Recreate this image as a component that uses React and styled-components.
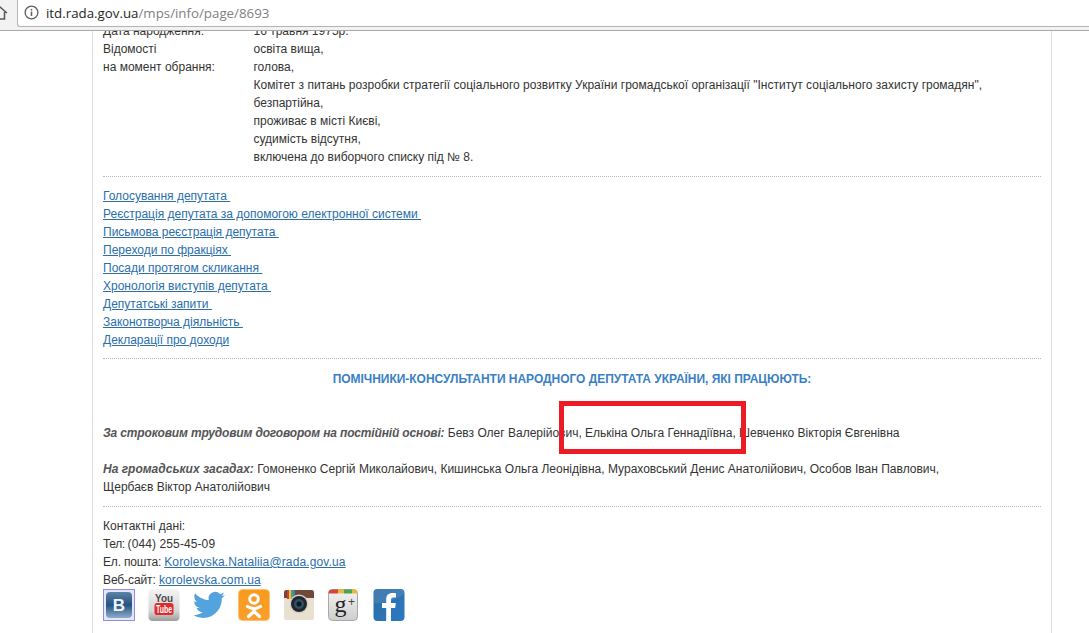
import React from 'react';
import styled, { createGlobalStyle } from 'styled-components';

const GlobalStyle = createGlobalStyle`
  html, body {
    margin: 0;
    padding: 0;
    height: 100%;
    overflow: hidden;
    background: #fff;
    font-family: "Liberation Sans", Arial, sans-serif;
  }
`;

const Page = styled.div`
  width: 1089px;
  height: 633px;
  overflow: hidden;
  display: flex;
  flex-direction: column;
`;

const Toolbar = styled.div`
  position: relative;
  z-index: 2;
  flex: none;
  height: 30px;
  background: #f2f2f2;
  border-bottom: 1px solid #a9a9a9;
  display: flex;
  align-items: flex-start;
`;

const HomeButton = styled.div`
  flex: none;
  width: 17px;
  height: 26px;
  overflow: hidden;
  display: flex;
  align-items: center;
  justify-content: flex-end;
  padding-right: 9px;
  box-sizing: border-box;
  color: #5a5a5a;
`;

const Omnibox = styled.div`
  flex: 1;
  height: 25px;
  background: #fff;
  border: 1px solid #b4b4b4;
  border-top: none;
  border-right: none;
  border-radius: 0 0 0 3px;
  display: flex;
  align-items: center;
  padding-left: 6px;
  gap: 7px;
  font-size: 13.3px;
  font-family: "Open Sans", "Liberation Sans", sans-serif;
  padding-bottom: 1px;
`;

const Host = styled.span`
  color: #262626;
`;

const UrlPath = styled.span`
  color: #7f7f7f;
  margin-left: -7px;
`;

const Panel = styled.div`
  margin: -9px 0 0 92px;
  width: 960px;
  height: 640px;
  box-sizing: border-box;
  border-left: 1px solid #dcdcdc;
  border-right: 1px solid #dcdcdc;
  padding: 0 0 0 10px;
  font-size: 12px;
  line-height: 18px;
  color: #333;
`;

const Inner = styled.div`
  width: 938px;
`;

const Bio = styled.div`
  display: grid;
  grid-template-columns: 150.5px 1fr;
`;

const Divider = styled.div`
  border-top: 1px dotted #b9b9b9;
  margin: ${p => p.$top}px 0 ${p => p.$bottom}px;
`;

const LinkList = styled.div`
  display: flex;
  flex-direction: column;
`;

const Link = styled.a`
  color: #2a6eab;
  text-decoration: underline;
  white-space: pre;
  letter-spacing: ${p => p.$spacing || 0}px;
`;

const Row = styled.div`
  white-space: pre;
`;

const Heading = styled.div`
  font-weight: bold;
  text-align: center;
  color: #3b7fc4;
  letter-spacing: -0.03px;
  margin: 0 0 36px;
`;

const Paragraph = styled.p`
  margin: 0 0 ${p => p.$bottom}px;
`;

const Lead = styled.b`
  font-style: italic;
  color: #555;
  letter-spacing: ${p => p.$spacing || 0}px;
`;

const Label = styled.span`
  letter-spacing: ${p => p.$spacing}px;
`;

const Socials = styled.div`
  display: flex;
  align-items: center;
  height: 32px;
  gap: 13px;
`;

const HighlightBox = styled.div`
  position: absolute;
  left: 559px;
  top: 401px;
  width: 187px;
  height: 53px;
  box-sizing: border-box;
  border: 5px solid #ed1c24;
`;

const Vk = () => (
  <svg width="32" height="32" viewBox="0 0 32 32">
    <defs>
      <linearGradient id="vk" x1="0" y1="0" x2="0" y2="1">
        <stop offset="0" stopColor="#5d83a8" />
        <stop offset="0.5" stopColor="#24527f" />
        <stop offset="1" stopColor="#8eaecb" />
      </linearGradient>
    </defs>
    <rect x="0.5" y="0.5" width="31" height="31" fill="#e6e6fa" stroke="#8d8de6" />
    <rect x="3" y="3" width="26" height="26" rx="4" fill="url(#vk)" />
    <text x="16" y="22" textAnchor="middle" fontFamily="Liberation Sans" fontWeight="bold" fontSize="17" fill="#eef3f8">B</text>
  </svg>
);

const YouTube = () => (
  <svg width="32" height="32" viewBox="0 0 32 32">
    <defs>
      <linearGradient id="yt" x1="0" y1="0" x2="0" y2="1">
        <stop offset="0" stopColor="#f4f4f4" />
        <stop offset="0.7" stopColor="#d4d4d4" />
        <stop offset="1" stopColor="#9c9c9c" />
      </linearGradient>
    </defs>
    <rect x="0.5" y="0" width="31" height="32" rx="4" fill="url(#yt)" />
    <text x="16" y="13" textAnchor="middle" fontFamily="Liberation Sans" fontWeight="bold" fontSize="11" fill="#4a4a4a" textLength="18" lengthAdjust="spacingAndGlyphs">You</text>
    <rect x="6.500" y="14" width="19" height="12" rx="2.500" fill="#e02a2f" />
    <text x="16" y="24" textAnchor="middle" fontFamily="Liberation Sans" fontWeight="bold" fontSize="10" fill="#fff" textLength="16" lengthAdjust="spacingAndGlyphs">Tube</text>
  </svg>
);

const Twitter = () => (
  <svg width="32" height="32" viewBox="0 0 24 24">
    <path
      fill="#52a3de"
      d="M23.95 4.57a10 10 0 0 1-2.82.77 4.96 4.96 0 0 0 2.16-2.72c-.95.56-2 .96-3.12 1.19a4.92 4.92 0 0 0-8.38 4.48C7.69 8.09 4.07 6.13 1.64 3.16a4.82 4.82 0 0 0-.67 2.48c0 1.71.87 3.21 2.19 4.1a4.9 4.9 0 0 1-2.23-.62v.06a4.92 4.92 0 0 0 3.95 4.83 4.99 4.99 0 0 1-2.21.08 4.94 4.94 0 0 0 4.6 3.42A9.87 9.87 0 0 1 0 19.54a14 14 0 0 0 7.56 2.21c9.05 0 14-7.5 14-13.98 0-.21 0-.42-.02-.63a9.94 9.94 0 0 0 2.41-2.57z"
    />
  </svg>
);

const Odnoklassniki = () => (
  <svg width="32" height="32" viewBox="0 0 32 32">
    <defs>
      <linearGradient id="ok" x1="0" y1="0" x2="0" y2="1">
        <stop offset="0" stopColor="#f99a1c" />
        <stop offset="1" stopColor="#fb9f2b" />
      </linearGradient>
    </defs>
    <rect x="0.5" y="0.5" width="31" height="31" rx="4" fill="url(#ok)" stroke="#fbc176" />
    <circle cx="16" cy="10" r="4.300" fill="none" stroke="#fff" strokeWidth="3" />
    <path d="M9.500 17.500c4 2.600 9 2.600 13 0M16 19.500v3M16 22.500l-5.500 5M16 22.500l5.500 5" fill="none" stroke="#fff" strokeWidth="3.200" strokeLinecap="round" />
  </svg>
);

const Instagram = () => (
  <svg width="32" height="32" viewBox="0 0 32 32">
    <rect x="1" y="1" width="30" height="30" rx="2.500" fill="#e8e0d0" />
    <path d="M1 3.500A2.500 2.500 0 0 1 3.500 1h25A2.500 2.500 0 0 1 31 3.500V9H1z" fill="#70493a" />
    <rect x="4" y="1" width="2" height="9" fill="#d9383c" />
    <rect x="6" y="1" width="2" height="9" fill="#eec13c" />
    <rect x="8" y="1" width="2" height="9" fill="#56a25a" />
    <rect x="10" y="1" width="2" height="9" fill="#3f7fc1" />
    <circle cx="16" cy="15" r="9.500" fill="#d9d3c7" />
    <circle cx="16" cy="15" r="8" fill="#22262e" />
    <circle cx="16" cy="15" r="5" fill="#2f5168" />
    <circle cx="16" cy="15" r="2.500" fill="#0e1620" />
  </svg>
);

const GooglePlus = () => (
  <svg width="32" height="32" viewBox="0 0 32 32">
    <defs>
      <linearGradient id="gp" x1="0" y1="0" x2="0" y2="1">
        <stop offset="0" stopColor="#f4f4f4" />
        <stop offset="1" stopColor="#cdcdcd" />
      </linearGradient>
    </defs>
    <rect x="0.500" y="0.500" width="29" height="31" rx="4" fill="url(#gp)" stroke="#a8a8a8" />
    <path d="M4 0.500h6v4H0.500V4A3.500 3.500 0 0 1 4 0.500z" fill="#d8453a" />
    <rect x="10" y="0.500" width="6" height="4" fill="#e8b93b" />
    <rect x="16" y="0.500" width="8" height="4" fill="#4ba356" />
    <path d="M24 0.500h2A3.500 3.500 0 0 1 29.500 4v.5H24z" fill="#e8b93b" />
    <text x="12.500" y="23" textAnchor="middle" fontFamily="Liberation Serif" fontSize="24" fill="#222">g</text>
    <text x="23.500" y="17" textAnchor="middle" fontFamily="Liberation Sans" fontSize="12" fill="#444">+</text>
  </svg>
);

const Facebook = () => (
  <svg width="32" height="32" viewBox="0 0 32 32">
    <defs>
      <linearGradient id="fb" x1="0" y1="0" x2="1" y2="1">
        <stop offset="0" stopColor="#2d6ba3" />
        <stop offset="1" stopColor="#2b7ac2" />
      </linearGradient>
    </defs>
    <rect x="0.500" y="0" width="31" height="32" rx="4" fill="url(#fb)" />
    <path d="M1 14C9 15 22 12 31 5V4a4 4 0 0 0-4-4H5a4 4 0 0 0-4 4z" fill="#fff" opacity="0.1" />
    <path d="M18 32V19h4.200l.6-5H18v-3c0-1.400.5-2.400 2.500-2.400h2.500V4.200C22.500 4.100 21 4 19.400 4c-3.700 0-6.200 2.200-6.200 6.300V14H9v5h4.200v13z" fill="#fff" />
  </svg>
);

const bio = [
  ['Дата народження:', '16 травня 1975р.'],
  ['Відомості', 'освіта вища,'],
  ['на момент обрання:', 'голова,'],
  ['', 'Комітет з питань розробки стратегії соціального розвитку України громадської організації "Інститут соціального захисту громадян",'],
  ['', 'безпартійна,'],
  ['', 'проживає в місті Києві,'],
  ['', 'судимість відсутня,'],
  ['', 'включена до виборчого списку під № 8.'],
];

const links = [
  'Голосування депутата ',
  'Реєстрація депутата за допомогою електронної системи ',
  'Письмова реєстрація депутата ',
  'Переходи по фракціях ',
  'Посади протягом скликання ',
  'Хронологія виступів депутата ',
  'Депутатські запити ',
  'Законотворча діяльність ',
  'Декларації про доходи',
];

export default function App() {
  return (
    <Page>
      <GlobalStyle />
      <Toolbar>
        <HomeButton>
          <svg width="16" height="16" viewBox="0 0 16 16" style={{ flex: 'none' }}>
            <path d="M1 8l7-6 7 6M3.500 7v7h9V7" fill="none" stroke="currentColor" strokeWidth="1.600" />
          </svg>
        </HomeButton>
        <Omnibox>
          <svg width="15" height="15" viewBox="0 0 16 16">
            <circle cx="8" cy="8" r="6.800" fill="none" stroke="#5f5f5f" strokeWidth="1.400" />
            <rect x="7.200" y="7" width="1.600" height="4.700" fill="#5f5f5f" />
            <rect x="7.200" y="4.200" width="1.600" height="1.700" fill="#5f5f5f" />
          </svg>
          <Host>itd.rada.gov.ua</Host>
          <UrlPath>/mps/info/page/8693</UrlPath>
        </Omnibox>
      </Toolbar>
      <Panel>
        <Inner>
          <Bio>
            {bio.map(([label, value], i) => (
              <React.Fragment key={i}>
                <div>{label}</div>
                <div>{value}</div>
              </React.Fragment>
            ))}
          </Bio>
          <Divider $top={10} $bottom={10} />
          <LinkList>
            {links.map(text => (
              <Row key={text}><Link href="#">{text}</Link></Row>
            ))}
          </LinkList>
          <Divider $top={9} $bottom={11} />
          <Heading>ПОМІЧНИКИ-КОНСУЛЬТАНТИ НАРОДНОГО ДЕПУТАТА УКРАЇНИ, ЯКІ ПРАЦЮЮТЬ:</Heading>
          <Paragraph $bottom={18}>
            <Lead $spacing={-0.155}>За строковим трудовим договором на постійній основі:</Lead> Бевз Олег Валерійович, Елькіна Ольга Геннадіївна, Шевченко Вікторія Євгенівна
          </Paragraph>
          <Paragraph $bottom={0}>
            <Lead>На громадських засадах:</Lead> Гомоненко Сергій Миколайович, Кишинська Ольга Леонідівна, Мураховський Денис Анатолійович, Особов Іван Павлович,<br />
            Щербаєв Віктор Анатолійович
          </Paragraph>
          <Divider $top={10} $bottom={10} />
          <div>Контактні дані:</div>
          <div><Label $spacing={-0.4}>Тел: </Label><Label $spacing={0.1}>(044) 255-45-09</Label></div>
          <div><Label $spacing={-0.18}>Ел. пошта: </Label><Link href="#" $spacing={0.13}>Korolevska.Nataliia@rada.gov.ua</Link></div>
          <div><Label $spacing={-0.1}>Веб-сайт: </Label><Link href="#" $spacing={0.1}>korolevska.com.ua</Link></div>
          <Socials>
            <Vk />
            <YouTube />
            <Twitter />
            <Odnoklassniki />
            <Instagram />
            <GooglePlus />
            <Facebook />
          </Socials>
        </Inner>
      </Panel>
      <HighlightBox />
    </Page>
  );
}
